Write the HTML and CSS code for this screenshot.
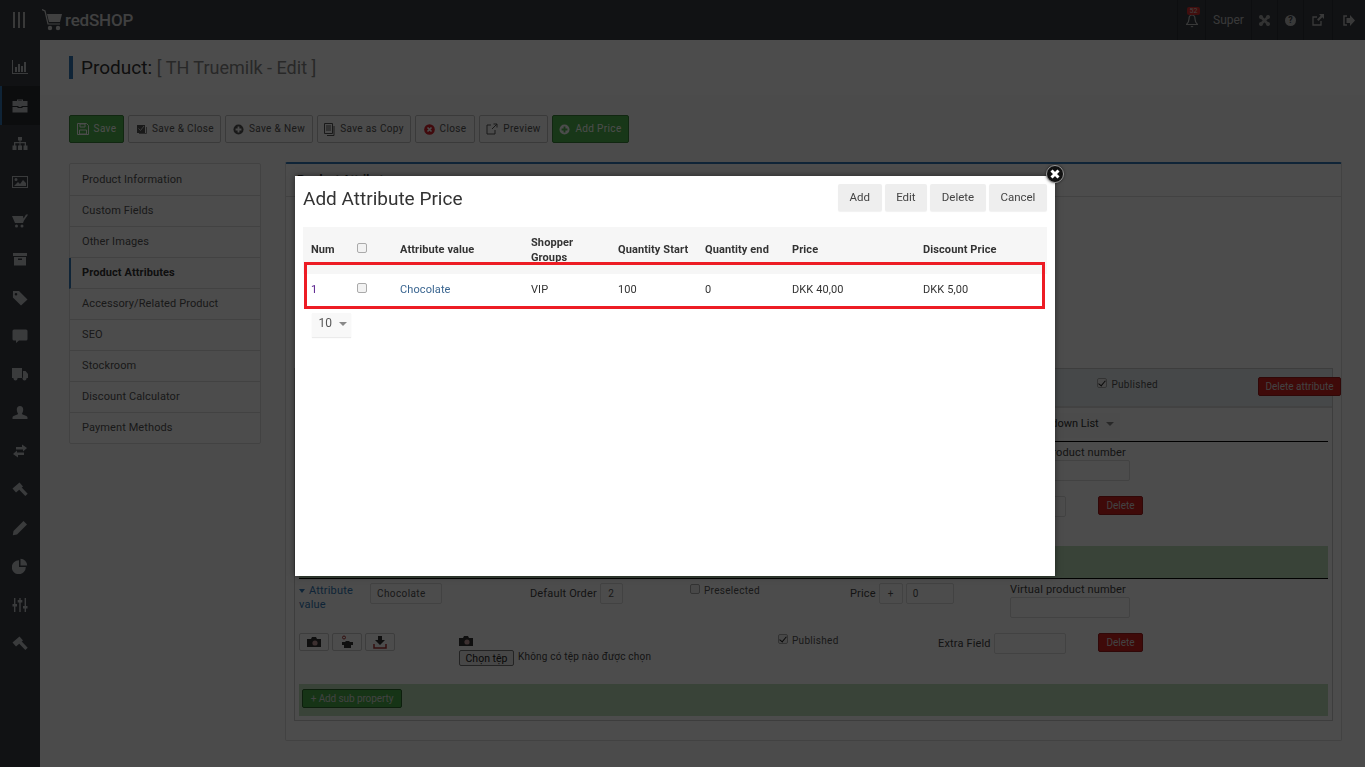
FILE: index.html
```html
<!DOCTYPE html>
<html lang="vi">
<head>
  <meta charset="UTF-8">
  <title>Product: TH Truemilk - Edit</title>
  <link rel="stylesheet" href="styles.css">
</head>
<body>
  <svg class="defs" width="0" height="0">
    <symbol id="i-gavel" viewBox="0 0 16 16"><path d="M.5 7.500 7.500 1.500 11 5.500 4 11.500ZM7 8.500 9.500 6.200 15.700 12.800 13.300 15Z"/></symbol>
    <symbol id="i-plus" viewBox="0 0 12 12"><circle cx="6" cy="6" r="5.500"/><path class="plus-cut" d="M5 2.800h2V5h2.200v2H7v2.200H5V7H2.800V5H5Z"/></symbol>
    <symbol id="i-camera" viewBox="0 0 14 12"><path d="M0 3h4l1-2h4l1 2h4v8H0Z" fill="#333"/><circle cx="8" cy="7" r="2.600" fill="#c9a0a0"/></symbol>
  </svg>

  <header class="topbar">
    <div class="burger"><i></i><i></i><i></i></div>
    <div class="logo">
      <svg width="21" height="23" viewBox="0 0 21 23"><path d="M0 .5 3 2l3 13h12" fill="none" stroke="#d8d8d8" stroke-width="1.200"/><path d="M5 5h15l-2 8H7Z" fill="#d8d8d8"/><circle cx="8" cy="19" r="2.200" fill="#d8d8d8"/><circle cx="16" cy="19" r="2.200" fill="#d8d8d8"/></svg>
      <span>redSHOP</span>
    </div>
    <div class="top-right">
      <div class="top-cell w28"><svg width="12" height="16" viewBox="0 0 12 16"><path d="M6 3C3.500 3 3 5 3 7c0 3-1 4-2.500 5.500h11C10 11 9 10 9 7c0-2-.5-4-3-4Z" fill="none" stroke="#c0c0c0" stroke-width="1.200"/><path d="M4.500 14h3L6 15.500Z" fill="#c0c0c0"/></svg><span class="badge">52</span></div>
      <div class="top-cell w46">Super</div>
      <div class="top-cell w26"><svg width="11" height="11" viewBox="0 0 11 11" fill="#a8a8a8"><circle cx="2" cy="2" r="2"/><circle cx="9" cy="2" r="2"/><circle cx="2" cy="9" r="2"/><circle cx="9" cy="9" r="2"/><path d="M1 1 10 10M10 1 1 10" stroke="#a8a8a8" stroke-width="2.500"/></svg></div>
      <div class="top-cell w26"><span class="help">?</span></div>
      <div class="top-cell w29"><svg width="12" height="12" viewBox="0 0 12 12"><path d="M9 7v4H1V3h4" fill="none" stroke="#c0c0c0" stroke-width="1.300"/><path d="M7 0h5v5l-1.700-1.700L6.500 7 5 5.500l3.700-3.800Z" fill="#c0c0c0"/></svg></div>
      <div class="top-cell w33"><svg width="12" height="11" viewBox="0 0 12 11"><path d="M4 1H1v9h3" fill="none" stroke="#c0c0c0" stroke-width="1.500"/><path d="M7 0l5 5.500L7 11V8H3.500V3H7Z" fill="#c0c0c0"/></svg></div>
    </div>
  </header>

  <div class="shell">
    <nav class="sidebar">
      <a class="side-item"><svg viewBox="0 0 16 16"><path d="M0 1h1v13h15v1H0Z"/><path d="M3 8h2v5H3ZM6 5h2v8H6ZM9 7h2v6H9ZM12 3h2v10h-2Z"/></svg></a>
      <a class="side-item active"><svg viewBox="0 0 16 16"><path d="M5 3V1.500h6V3h4.500v5H9.500v1h-3V8H.5V3ZM6.200 3h3.600v-.5H6.200ZM.5 9h5v1h5V9h5v5.500H.5Z"/></svg></a>
      <a class="side-item"><svg viewBox="0 0 16 16"><path d="M6 1h4v3.500H8.500V6H14v3.500h1.500V14h-4V9.500h1.200V7.200H8.500v2.300H10V14H6V9.500h1.500V7.200H3.300v2.300h1.200V14h-4V9.500H2V6h5.500V4.500H6Z"/></svg></a>
      <a class="side-item"><svg viewBox="0 0 16 16"><path d="M0 2h16v12H0Zm1 1v10h14V3Zm1 9 4-4 2 2 3-4 3 3v3ZM4 4a1.500 1.500 0 1 1 0 3 1.500 1.500 0 0 1 0-3Z" fill-rule="evenodd"/></svg></a>
      <a class="side-item"><svg viewBox="0 0 16 16"><path d="M0 3h11l.5 2.500L14 1.500h2l-.5 1-3.500 5L11 10H3Z"/><circle cx="4.500" cy="13" r="1.500"/><circle cx="10" cy="13" r="1.500"/></svg></a>
      <a class="side-item"><svg viewBox="0 0 16 16"><path d="M1 2h14v3H1ZM2 6h12v8.500H2Zm4 1.500V9h4V7.500Z" fill-rule="evenodd"/></svg></a>
      <a class="side-item"><svg viewBox="0 0 16 16"><path d="M1 1h6l8.500 8.500L9 15.500.9 7.500ZM4 3a1.300 1.300 0 1 0 0 2.600A1.300 1.300 0 0 0 4 3Z" fill-rule="evenodd"/></svg></a>
      <a class="side-item"><svg viewBox="0 0 16 16"><path d="M2 1.500h12a1.500 1.500 0 0 1 1.500 1.500v8a1.500 1.500 0 0 1-1.500 1.500H7L4 15v-2.500H2A1.500 1.500 0 0 1 .5 11V3A1.500 1.500 0 0 1 2 1.500Z"/></svg></a>
      <a class="side-item"><svg viewBox="0 0 16 16"><path d="M0 2h10v10H0ZM11 5h2.500L16 8v4h-5Z"/><circle cx="3.500" cy="12.500" r="2"/><circle cx="12.500" cy="12.500" r="2"/></svg></a>
      <a class="side-item"><svg viewBox="0 0 16 16"><path d="M8 1c2 0 3.200 1.500 3.200 3.500S10.300 8 9.800 9c1 1 5.700 1.500 5.700 3.500V14H.5v-1.500C.5 10.500 5.200 10 6.200 9 5.700 8 4.800 6.500 4.800 4.500S6 1 8 1Z"/></svg></a>
      <a class="side-item"><svg viewBox="0 0 16 16"><path d="M4 4h6V1.500L15 5l-4 3.500V6.500H4ZM12 9.500V12H6v2.500L1 11l4-3.500v2Z"/></svg></a>
      <a class="side-item"><svg><use href="#i-gavel"/></svg></a>
      <a class="side-item"><svg viewBox="0 0 16 16"><path d="M11.500 1 15 4.500 5 14.500.8 15.300 1.500 11Z"/></svg></a>
      <a class="side-item"><svg viewBox="0 0 16 16"><path d="M7 2.200V9h6.800A7 7 0 1 1 7 2.200ZM8.500.8A7 7 0 0 1 15.200 7.500H8.500Z"/></svg></a>
      <a class="side-item"><svg viewBox="0 0 16 16"><path d="M2 1h1.400v6H5v2.500H3.400V15H2V9.500H.5V7H2ZM7.300 1h1.400v2H10.300v2.500H8.700V15H7.300V5.500H5.700V3h1.600ZM12.600 1H14v8h1.500v2.500H14V15h-1.400v-3.500H11V9h1.600Z"/></svg></a>
      <a class="side-item"><svg><use href="#i-gavel"/></svg></a>
    </nav>

    <main class="main">
      <div class="title-bar">
        <h1 class="page-title">Product: <small>[ TH Truemilk - Edit ]</small></h1>
      </div>

      <div class="toolbar">
        <button class="btn btn-green w55"><svg width="12" height="12" viewBox="0 0 12 12"><path d="M.5.500h9l2 2v9H.5ZM3 1v3h5V1ZM2.500 7v4h7V7Z" fill="none" stroke="#fff"/></svg>Save</button>
        <button class="btn w93"><svg width="12" height="12" viewBox="0 0 12 12"><path d="M2 2h8v8H2Z" fill="#555"/><path d="M3.500 5.500 5.500 7.500 9 3" fill="none" stroke="#ccc"/><path d="M4 10.500h7.500V4" fill="none" stroke="#888"/></svg>Save &amp; Close</button>
        <button class="btn w88"><svg class="ico-dark" width="11" height="11"><use href="#i-plus"/></svg>Save &amp; New</button>
        <button class="btn w94"><svg width="11" height="13" viewBox="0 0 11 13"><path d="M.5.500h8v10h-8ZM2 3h5M2 5h5M2 7h5M10 3v9.500H3" fill="none" stroke="#555"/></svg>Save as Copy</button>
        <button class="btn w60"><svg class="ico-red" width="11" height="11" viewBox="0 0 12 12"><circle cx="6" cy="6" r="5.800"/><path d="M3.800 3.800l4.400 4.400m0-4.400L3.800 8.200" stroke="#fff" stroke-width="1.800"/></svg>Close</button>
        <button class="btn w69"><svg width="12" height="12" viewBox="0 0 12 12"><path d="M9 7v4H1V2h4M6 6l5-5M7.500 1H11v3.500" fill="none" stroke="#555"/></svg>Preview</button>
        <button class="btn btn-green w77"><svg class="ico-light" width="11" height="11"><use href="#i-plus"/></svg>Add Price</button>
      </div>

      <div class="columns">
        <ul class="tabs">
          <li>Product Information</li>
          <li>Custom Fields</li>
          <li>Other Images</li>
          <li class="current">Product Attributes</li>
          <li>Accessory/Related Product</li>
          <li>SEO</li>
          <li>Stockroom</li>
          <li>Discount Calculator</li>
          <li>Payment Methods</li>
        </ul>

        <section class="panel">
          <div class="panel-head">Product Attributes</div>
          <div class="attr-box">
            <div class="attr-head">
              <label class="check-label"><input type="checkbox" checked> Published</label>
              <button class="btn-red btn-del-attr">Delete attribute</button>
            </div>
            <div class="attr-type"><div class="fake-select">Dropdown List<i class="caret"></i></div></div>

            <div class="prop prop-line">
              <div class="prop-top">
                <label class="attr-label"><i class="tri"></i> Attribute value</label>
                <div class="field"><span class="input w72">Vanilla</span></div>
                <div class="field"><span>Default Order</span><span class="input w23 center">1</span></div>
                <label class="check-label"><input type="checkbox"> Preselected</label>
                <div class="field"><span>Price</span><span class="input w24 center">+</span><span class="input w48">0</span></div>
                <div class="virtual"><span>Virtual product number</span><span class="input w120"></span></div>
              </div>
              <div class="prop-bottom">
                <div class="img-btns">
                  <span class="img-btn"><svg width="14" height="12"><use href="#i-camera"/></svg></span>
                  <span class="img-btn"></span>
                  <span class="img-btn"></span>
                </div>
                <div class="file-col">
                  <svg width="14" height="12"><use href="#i-camera"/></svg>
                  <div class="file-row"><span class="file-btn">Chọn tệp</span><span class="file-name">Không có tệp nào được chọn</span></div>
                </div>
                <label class="check-label"><input type="checkbox" checked> Published</label>
                <div class="field"><span>Extra Field</span><span class="input w72"></span></div>
                <button class="btn-red btn-del">Delete</button>
              </div>
              <div class="sub-band"><button class="btn-sub">+ Add sub property</button></div>
            </div>

            <div class="prop">
              <div class="prop-top">
                <label class="attr-label"><i class="tri"></i> Attribute value</label>
                <div class="field"><span class="input w72">Chocolate</span></div>
                <div class="field"><span>Default Order</span><span class="input w23 center">2</span></div>
                <label class="check-label"><input type="checkbox"> Preselected</label>
                <div class="field"><span>Price</span><span class="input w24 center">+</span><span class="input w48">0</span></div>
                <div class="virtual"><span>Virtual product number</span><span class="input w120"></span></div>
              </div>
              <div class="prop-bottom">
                <div class="img-btns">
                  <span class="img-btn"><svg width="14" height="12"><use href="#i-camera"/></svg></span>
                  <span class="img-btn"><svg width="14" height="14" viewBox="0 0 14 14"><circle cx="4" cy="2.500" r="1.500" fill="none" stroke="#a33"/><path d="M2 7h3l1-1h3l1 1h3v3h-2v3H4v-3H2Z" fill="#333"/></svg></span>
                  <span class="img-btn"><svg width="14" height="13" viewBox="0 0 14 13"><path d="M5 0h4v4h3L7 9 2 4h3Z" fill="#333"/><path d="M1 8v4h12V8" fill="none" stroke="#a33" stroke-width="1.500"/></svg></span>
                </div>
                <div class="file-col">
                  <svg width="14" height="12"><use href="#i-camera"/></svg>
                  <div class="file-row"><span class="file-btn">Chọn tệp</span><span class="file-name">Không có tệp nào được chọn</span></div>
                </div>
                <label class="check-label"><input type="checkbox" checked> Published</label>
                <div class="field"><span>Extra Field</span><span class="input w72"></span></div>
                <button class="btn-red btn-del">Delete</button>
              </div>
              <div class="sub-band"><button class="btn-sub">+ Add sub property</button></div>
            </div>
          </div>
        </section>
      </div>
    </main>
  </div>

  <div class="overlay"></div>

  <div class="modal">
    <div class="modal-head">
      <h2 class="modal-title">Add Attribute Price</h2>
      <div class="modal-actions">
        <button class="m-btn">Add</button>
        <button class="m-btn">Edit</button>
        <button class="m-btn">Delete</button>
        <button class="m-btn">Cancel</button>
      </div>
    </div>
    <table class="price-table">
      <thead>
        <tr>
          <th class="c-num">Num</th>
          <th class="c-check"><input type="checkbox"></th>
          <th class="c-wide">Attribute value</th>
          <th class="c-std">Shopper<br>Groups</th>
          <th class="c-std">Quantity Start</th>
          <th class="c-std">Quantity end</th>
          <th class="c-wide">Price</th>
          <th>Discount Price</th>
        </tr>
      </thead>
      <tbody>
        <tr>
          <td class="num-link">1</td>
          <td><input type="checkbox"></td>
          <td class="value-link">Chocolate</td>
          <td>VIP</td>
          <td>100</td>
          <td>0</td>
          <td>DKK 40,00</td>
          <td>DKK 5,00</td>
        </tr>
      </tbody>
    </table>
    <div class="page-size">10<i class="caret"></i></div>
    <div class="highlight"></div>
    <span class="modal-close"><svg width="10" height="10" viewBox="0 0 10 10"><path d="M1.500 1.500l7 7m0-7-7 7" stroke="#fff" stroke-width="3"/></svg></span>
  </div>
</body>
</html>
```

FILE: styles.css
```css
* {
  box-sizing: border-box;
}

html, body {
  height: 100%;
}

body {
  margin: 0;
  font-family: Roboto, 'Liberation Sans', sans-serif;
  font-size: 12px;
  color: #333;
  background: #fff;
  overflow: hidden;
}

.defs {
  display: block;
  height: 0;
}

/* top bar */
.topbar {
  height: 40px;
  background: #393d45;
  display: flex;
  align-items: center;
}

.burger {
  width: 37px;
  display: flex;
  justify-content: center;
  gap: 3px;
}

.burger i {
  width: 2px;
  height: 16px;
  background: #c0c0c0;
}

.logo {
  margin-left: 5px;
  display: flex;
  align-items: center;
  gap: 2px;
  color: #d8d8d8;
  font-size: 17px;
  font-weight: 500;
  letter-spacing: -0.2px;
}

.top-right {
  margin-left: auto;
  height: 40px;
  display: flex;
}

.top-cell {
  position: relative;
  display: flex;
  align-items: center;
  justify-content: center;
  border-left: 1px solid #2e3138;
  color: #c0c0c0;
  font-size: 12px;
}

.w26 { width: 26px; }
.w28 { width: 28px; }
.w29 { width: 29px; }
.w33 { width: 33px; }
.w46 { width: 46px; }

.badge {
  position: absolute;
  top: 7px;
  left: 9px;
  width: 13px;
  height: 8px;
  border-radius: 2px;
  background: #d9312f;
  color: #ddd;
  font-size: 7px;
  line-height: 8px;
  text-align: center;
}

.help {
  width: 11px;
  height: 11px;
  border-radius: 50%;
  background: #c0c0c0;
  color: #393d45;
  font-size: 9px;
  font-weight: 700;
  line-height: 11px;
  text-align: center;
}

/* sidebar */
.shell {
  display: flex;
  height: 727px;
}

.sidebar {
  width: 40px;
  flex-shrink: 0;
  background: #393d45;
  padding-top: 8px;
}

.side-item {
  height: 38.4px;
  display: flex;
  align-items: center;
  justify-content: center;
  color: #c2c5ca;
}

.side-item svg {
  width: 16px;
  height: 16px;
  fill: currentColor;
}

.side-item.active {
  background: #2a2c31;
  border-left: 2px solid #337ab7;
  padding-right: 2px;
}

/* main */
.main {
  flex: 1;
  min-width: 0;
  background: #fcfcfc;
}

.title-bar {
  height: 55px;
  padding: 16px 0 0 29px;
  background: #fff;
}

.page-title {
  margin: 0;
  height: 23px;
  border-left: 4px solid #337ab7;
  padding-left: 8px;
  font-size: 19px;
  font-weight: 400;
  line-height: 24px;
  color: #333;
}

.page-title small {
  font-size: 18px;
  color: #888;
}

.toolbar {
  margin-top: 20px;
  padding-left: 29px;
  display: flex;
  gap: 4px;
}

.btn {
  height: 28px;
  display: flex;
  align-items: center;
  justify-content: center;
  gap: 5px;
  padding: 0 0 2px;
  border: 1px solid #c4c4c4;
  border-radius: 2px;
  background: #fafafa;
  color: #555;
  font-family: inherit;
  font-size: 10px;
  letter-spacing: 0.35px;
}

.btn svg {
  margin-top: 2px;
}

.btn-green {
  background: #50b850;
  border-color: #398439;
  color: #fff;
}

.w55 { width: 55px; }
.w60 { width: 60px; }
.w69 { width: 69px; }
.w77 { width: 77px; }
.w88 { width: 88px; }
.w93 { width: 93px; }
.w94 { width: 94px; }

.ico-dark { fill: #555; --cut: #fafafa; }
.ico-red { fill: #d9232d; }
.ico-light { fill: #fff; --cut: #50b850; }
.plus-cut { fill: var(--cut); }

.columns {
  margin-top: 19px;
  padding: 0 23px 0 29px;
  display: grid;
  grid-template-columns: 192px 1057px;
  gap: 24px;
  align-items: start;
}

.tabs {
  list-style: none;
  margin: 1px 0 0;
  padding: 1px 0 0;
  border: 1px solid #ddd;
  border-radius: 2px;
  background: #fff;
}

.tabs li {
  height: 31px;
  padding-left: 12px;
  border-bottom: 1px solid #ddd;
  color: #555;
  font-size: 11px;
  letter-spacing: 0.1px;
  line-height: 30px;
}

.tabs li:last-child {
  border-bottom: 0;
  height: 30px;
}

.tabs li.current {
  border-left: 2px solid #337ab7;
  padding-left: 11px;
  margin-left: -1px;
  font-weight: 700;
  color: #333;
}

.panel {
  height: 579px;
  border: 1px solid #ddd;
  border-top: 2px solid #337ab7;
  border-radius: 2px;
  background: #fff;
}

.panel-head {
  height: 33px;
  padding: 9px 0 0 11px;
  border-bottom: 1px solid #ddd;
  font-size: 12px;
  font-weight: 700;
}

.attr-box {
  margin: 171px 8px 0 8px;
  height: 353px;
  border: 1px solid #ccc;
}

.attr-head {
  height: 39px;
  display: flex;
  align-items: flex-start;
  justify-content: flex-end;
  background: #eaf2f4;
  border-bottom: 2px solid #ddd;
}

.attr-head .check-label {
  margin: 9px 100px 0 0;
}

.btn-del-attr {
  width: 83px;
  height: 19px;
  margin: 8px -9px 0 0;
}

.btn-red {
  border: 1px solid #a11b1b;
  border-radius: 2px;
  background: #d42420;
  color: #ddd;
  padding: 0;
  font-family: inherit;
  font-size: 10px;
}

.attr-type {
  height: 34px;
  margin: 0 4px;
  padding: 5px 208px 0 0;
  display: flex;
  justify-content: flex-end;
  border-bottom: 1px solid #000;
}

.fake-select {
  width: 98px;
  height: 25px;
  padding-left: 6px;
  background: #fafafa;
  font-size: 11px;
  line-height: 21px;
  display: flex;
  align-items: flex-start;
  gap: 7px;
}

.caret {
  width: 0;
  height: 0;
  margin-top: 9px;
  border-left: 4px solid transparent;
  border-right: 4px solid transparent;
  border-top: 4px solid #888;
}

/* attribute value rows */
.prop {
  height: 137px;
  margin: 0 4px;
  padding-top: 4px;
  display: flex;
  flex-direction: column;
}

.prop-line {
  border-bottom: 1px solid #000;
}

.prop-top {
  height: 50px;
  display: grid;
  grid-template-columns: 71px 160px 160px 160px 160px 120px;
  align-items: start;
}

.prop-bottom {
  display: grid;
  grid-template-columns: 160px 319px 160px 160px 45px;
  align-items: start;
}

.attr-label {
  margin-top: 1px;
  color: #337ab7;
  font-size: 11px;
  letter-spacing: 0.2px;
  line-height: 14px;
}

.tri {
  display: inline-block;
  width: 0;
  height: 0;
  margin-right: 1px;
  vertical-align: 1px;
  border-left: 3px solid transparent;
  border-right: 3px solid transparent;
  border-top: 4px solid #337ab7;
}

.field {
  display: flex;
  align-items: center;
  gap: 3px;
  color: #444;
  font-size: 11px;
  letter-spacing: 0.15px;
}

.input {
  height: 21px;
  padding-left: 6px;
  border: 1px solid #ddd;
  border-radius: 2px;
  background: #fff;
  color: #555;
  font-size: 10px;
  letter-spacing: 0.4px;
  line-height: 19px;
}

.center {
  padding-left: 0;
  text-align: center;
}

.w23 { width: 23px; }
.w24 { width: 24px; }
.w48 { width: 48px; }
.w72 { width: 72px; }
.w120 { width: 120px; }

.virtual {
  display: flex;
  flex-direction: column;
  color: #444;
  font-size: 11px;
  letter-spacing: 0.15px;
  line-height: 14px;
  white-space: nowrap;
}

.check-label {
  display: inline-flex;
  align-items: flex-start;
  gap: 4px;
  color: #555;
  font-size: 10px;
  letter-spacing: 0.3px;
  line-height: 13px;
}

.prop-top .check-label,
.prop-bottom .check-label {
  margin-top: 1px;
}

input[type=checkbox] {
  appearance: none;
  width: 10px;
  height: 10px;
  margin: 0;
  border: 1px solid #aaa;
  border-radius: 2px;
  background: #f2f2f2;
  position: relative;
}

input[type=checkbox]:checked::after {
  content: "";
  position: absolute;
  left: 2px;
  top: 0;
  width: 3px;
  height: 6px;
  border: solid #222;
  border-width: 0 1.5px 1.5px 0;
  transform: rotate(40deg);
}

.img-btns {
  display: flex;
  gap: 3px;
}

.img-btn {
  width: 30px;
  height: 18px;
  display: flex;
  align-items: center;
  justify-content: center;
  border: 1px solid #ccc;
  border-radius: 2px;
  background: #fff;
}

.file-col {
  padding-top: 2px;
  display: flex;
  flex-direction: column;
  gap: 3px;
}

.file-row {
  display: flex;
  align-items: flex-start;
  gap: 4px;
}

.file-btn {
  width: 55px;
  height: 16px;
  border: 1px solid #777;
  border-radius: 2px;
  background: #efefef;
  color: #222;
  font-size: 10.5px;
  line-height: 16px;
  text-align: center;
}

.file-name {
  color: #444;
  font-size: 10px;
  letter-spacing: 0.2px;
  line-height: 14px;
}

.btn-del {
  width: 45px;
  height: 19px;
}

.sub-band {
  height: 32px;
  margin-top: auto;
  padding: 5px 0 0 3px;
  background: #bfe0bc;
}

.btn-sub {
  width: 100px;
  height: 19px;
  padding: 0;
  border: 1px solid #2c6a2c;
  border-radius: 2px;
  background: #4cb04c;
  color: #ddd;
  font-family: inherit;
  font-size: 10px;
  letter-spacing: -0.1px;
}

/* overlay + modal */
.overlay {
  position: fixed;
  inset: 0;
  background: rgba(0,0,0,0.7);
}

.modal {
  position: absolute;
  top: 176px;
  left: 295px;
  width: 760px;
  height: 400px;
  padding: 8px 8px 0;
  background: #fff;
  box-shadow: 0 0 6px rgba(0,0,0,0.5);
}

.modal-head {
  height: 43px;
  display: flex;
  justify-content: space-between;
  align-items: flex-start;
}

.modal-title {
  margin: 3px 0 0;
  font-size: 19px;
  font-weight: 400;
  line-height: 24px;
  color: #333;
}

.modal-actions {
  display: flex;
  gap: 3px;
}

.m-btn {
  height: 27px;
  padding: 0 11.6px 2px;
  border: 0;
  border-radius: 2px;
  background: #eee;
  color: #444;
  font-family: inherit;
  font-size: 11.5px;
  box-shadow: 0 1px 1px rgba(0,0,0,0.06);
}

.price-table {
  width: 744px;
  border-collapse: collapse;
  table-layout: fixed;
  font-size: 11px;
  letter-spacing: 0.1px;
}

.price-table th {
  height: 47px;
  padding: 0 0 2px 8px;
  background: #f6f6f6;
  font-weight: 700;
  line-height: 15px;
  text-align: left;
  vertical-align: middle;
  white-space: nowrap;
}

.price-table td {
  height: 32px;
  padding: 0 8px 2px;
  color: #333;
}

.price-table input[type=checkbox] {
  margin-top: 1px;
}

.c-num { width: 46px; }
.c-check { width: 43px; }
.c-wide { width: 131px; }
.c-std { width: 87px; }

.num-link { color: #551a8b !important; }
.value-link { color: #3a6590 !important; }

.page-size {
  width: 39px;
  height: 24px;
  margin: 7px 0 0 8.5px;
  padding: 3px 0 0 7px;
  display: flex;
  gap: 7px;
  background: #f8f8f8;
  box-shadow: 0 1px 1px rgba(0,0,0,0.08);
  color: #555;
  font-size: 12px;
}

.page-size .caret {
  margin-top: 6px;
}

.highlight {
  position: absolute;
  top: 86px;
  left: 9px;
  width: 741px;
  height: 47px;
  border: 3px solid #ed1c24;
}

.modal-close {
  position: absolute;
  top: -11px;
  right: -9px;
  width: 18px;
  height: 18px;
  display: flex;
  align-items: center;
  justify-content: center;
  border: 1px solid #999;
  border-radius: 50%;
  background: #111;
  box-shadow: 0 0 3px rgba(0,0,0,0.6);
}
```
